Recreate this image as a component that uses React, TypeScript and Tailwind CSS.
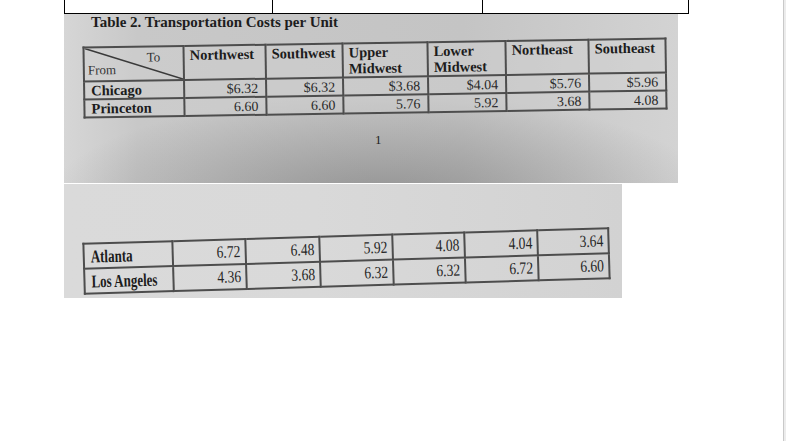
import React from "react"

// column widths of the two photographed tables
const COLS_1 = ["w-[100px]", "w-[82px]", "w-[77px]", "w-[85px]", "w-[78px]", "w-[83px]", "w-[77px]"]
const COLS_2 = ["w-[89px]", "w-[73px]", "w-[74px]", "w-[73px]", "w-[72px]", "w-[73px]", "w-[71px]"]

const HEADS: string[][] = [
  ["Northwest"],
  ["Southwest"],
  ["Upper", "Midwest"],
  ["Lower", "Midwest"],
  ["Northeast"],
  ["Southeast"],
]

const ROWS_1 = [
  { from: "Chicago", costs: ["$6.32", "$6.32", "$3.68", "$4.04", "$5.76", "$5.96"] },
  { from: "Princeton", costs: ["6.60", "6.60", "5.76", "5.92", "3.68", "4.08"] },
]

const ROWS_2 = [
  { from: "Atlanta", costs: ["6.72", "6.48", "5.92", "4.08", "4.04", "3.64"] },
  { from: "Los Angeles", costs: ["4.36", "3.68", "6.32", "6.32", "6.72", "6.60"] },
]

const cell = "border-2 border-[#4d4d4d]"

function FirstPhoto() {
  return (
    <div className="ml-[64px] w-[614px] h-[169px] overflow-hidden bg-[radial-gradient(ellipse_55%_65%_at_52%_112%,rgba(110,110,110,0.6),rgba(110,110,110,0)),linear-gradient(to_right,#d6d6d6,#c8c8c8_12%,#c4c4c4_65%,#d3d3d3)]">
      <div className="pl-[27px] text-[15px] leading-[16px] font-bold text-[#1d1d1d]">
        Table 2. Transportation Costs per Unit
      </div>

      <table className="ml-[19px] mt-[12px] w-[582px] table-fixed border-collapse bg-[#d3d3d3]/40 rotate-[-0.9deg] text-[#1c1c1c]">
        <colgroup>
          {COLS_1.map((c, i) => (
            <col key={i} className={c} />
          ))}
        </colgroup>
        <thead>
          <tr>
            <th className={`${cell} relative h-[34px] p-0 font-normal`}>
              <svg className="absolute inset-0 w-full h-full" viewBox="0 0 100 100" preserveAspectRatio="none">
                <line x1="0" y1="0" x2="100" y2="100" stroke="#3a3a3a" strokeWidth="1.5" vectorEffect="non-scaling-stroke" />
              </svg>
              <span className="absolute left-[62px] top-[3px] text-[13px] leading-[14px] text-[#333]">To</span>
              <span className="absolute left-[3px] top-[15px] text-[13px] leading-[14px] text-[#333]">From</span>
            </th>
            {HEADS.map((h) => (
              <th key={h.join(" ")} className={`${cell} px-[5px] pt-0 align-top text-left text-[14.5px] leading-[16px] font-bold`}>
                {h.map((line) => (
                  <div key={line}>{line}</div>
                ))}
              </th>
            ))}
          </tr>
        </thead>
        <tbody>
          {ROWS_1.map((r) => (
            <tr key={r.from}>
              <td className={`${cell} h-[18px] px-[6px] py-0 text-left text-[14.5px] leading-[15px] font-bold`}>{r.from}</td>
              {r.costs.map((c, i) => (
                <td key={i} className={`${cell} py-0 pr-[7px] text-right text-[14px] leading-[15px] text-[#2a2a2a]`}>
                  {c}
                </td>
              ))}
            </tr>
          ))}
        </tbody>
      </table>

      <div className="ml-[311px] mt-[19px] text-[13px] leading-[14px] text-[#222]">1</div>
    </div>
  )
}

function SecondPhoto() {
  return (
    <div className="ml-[64px] mt-[1px] w-[558px] h-[114px] overflow-hidden pt-[51px] bg-[linear-gradient(to_right,#dadada,#d9d9d9_45%,#d2d2d2)]">
      <table className="ml-[19px] w-[525px] table-fixed border-collapse rotate-[-1.7deg] text-[#1c1c1c]">
        <colgroup>
          {COLS_2.map((c, i) => (
            <col key={i} className={c} />
          ))}
        </colgroup>
        <tbody>
          {ROWS_2.map((r) => (
            <tr key={r.from}>
              <td className={`${cell} h-[25px] px-[6px] py-0 text-left text-[18px] leading-[20px] font-bold whitespace-nowrap`}>
                <span className="inline-block origin-left scale-x-72">{r.from}</span>
              </td>
              {r.costs.map((c, i) => (
                <td key={i} className={`${cell} py-0 pr-[4px] text-right text-[17px] leading-[20px] text-[#262626]`}>
                  <span className="inline-block origin-right scale-x-80">{c}</span>
                </td>
              ))}
            </tr>
          ))}
        </tbody>
      </table>
    </div>
  )
}

export default function App() {
  return (
    <div className="flex w-[786px] h-[441px] overflow-hidden bg-white font-['Liberation_Serif','Times_New_Roman',serif]">
      <div className="flex-1">
        {/* cut-off row of the document table above */}
        <div className="ml-[64px] grid w-[625px] h-[14px] grid-cols-[208px_210px_1fr] border-x border-b border-black">
          <div className="border-r border-black" />
          <div className="border-r border-black" />
          <div />
        </div>
        <FirstPhoto />
        <SecondPhoto />
      </div>
      <div className="w-[3px] border-l border-[#c9c9c9] bg-[#ececec]" />
    </div>
  )
}
